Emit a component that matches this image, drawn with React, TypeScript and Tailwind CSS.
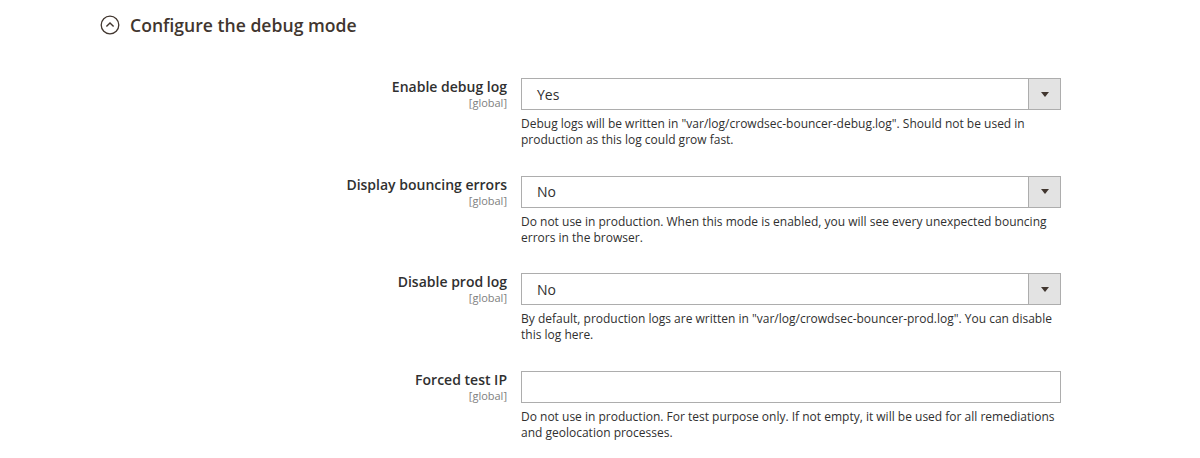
import React from 'react';

interface Field {
  label: string;
  value?: string;
  note: string;
}

const fields: Field[] = [
  {
    label: 'Enable debug log',
    value: 'Yes',
    note: 'Debug logs will be written in "var/log/crowdsec-bouncer-debug.log". Should not be used in production as this log could grow fast.',
  },
  {
    label: 'Display bouncing errors',
    value: 'No',
    note: 'Do not use in production. When this mode is enabled, you will see every unexpected bouncing errors in the browser.',
  },
  {
    label: 'Disable prod log',
    value: 'No',
    note: 'By default, production logs are written in "var/log/crowdsec-bouncer-prod.log". You can disable this log here.',
  },
  {
    label: 'Forced test IP',
    note: 'Do not use in production. For test purpose only. If not empty, it will be used for all remediations and geolocation processes.',
  },
];

const SelectBox: React.FC<{ value: string }> = ({ value }) => (
  <div className="flex h-[32px] w-[540px] border border-[#adadad] bg-white">
    <div className="flex flex-1 items-center pl-[15px] text-[14px] text-[#303030]">{value}</div>
    <div className="flex w-[32px] items-center justify-center border-l border-[#adadad] bg-[#e3e3e3]">
      <span className="block h-0 w-0 border-x-[4px] border-t-[5px] border-x-transparent border-t-[#41362f]" />
    </div>
  </div>
);

const App: React.FC = () => {
  return (
    <div
      className="h-[458px] w-[1200px] bg-white pl-[100px]"
      style={{ fontFamily: '"Open Sans", "Liberation Sans", sans-serif' }}
    >
      <div className="flex h-[50px] items-center">
        <svg width="20" height="20" viewBox="0 0 20 20" className="mr-[10px]">
          <circle cx="10" cy="10" r="8.8" fill="none" stroke="#41362f" strokeWidth="1.3" />
          <path d="M6.4 11.6 L10 8 L13.6 11.6" fill="none" stroke="#41362f" strokeWidth="1.4" />
        </svg>
        <h2 className="text-[17.6px] font-semibold text-[#41362f]">Configure the debug mode</h2>
      </div>

      <div className="mt-[28px] flex flex-col gap-[27.7px]">
        {fields.map((f) => (
          <div key={f.label} className="flex">
            <div className="w-[421px] pr-[14px] text-right">
              <div className="text-[14px] font-semibold leading-[18px] text-[#303030]">{f.label}</div>
              <div className="text-[11px] leading-[14px] text-[#808080]">[global]</div>
            </div>
            <div className="w-[540px]">
              {f.value !== undefined ? (
                <SelectBox value={f.value} />
              ) : (
                <div className="h-[32px] w-[540px] border border-[#adadad] bg-white" />
              )}
              <p className="mt-[6px] pr-[4px] text-[12px] leading-[16px] text-[#303030]">{f.note}</p>
            </div>
          </div>
        ))}
      </div>
    </div>
  );
};

export default App;
